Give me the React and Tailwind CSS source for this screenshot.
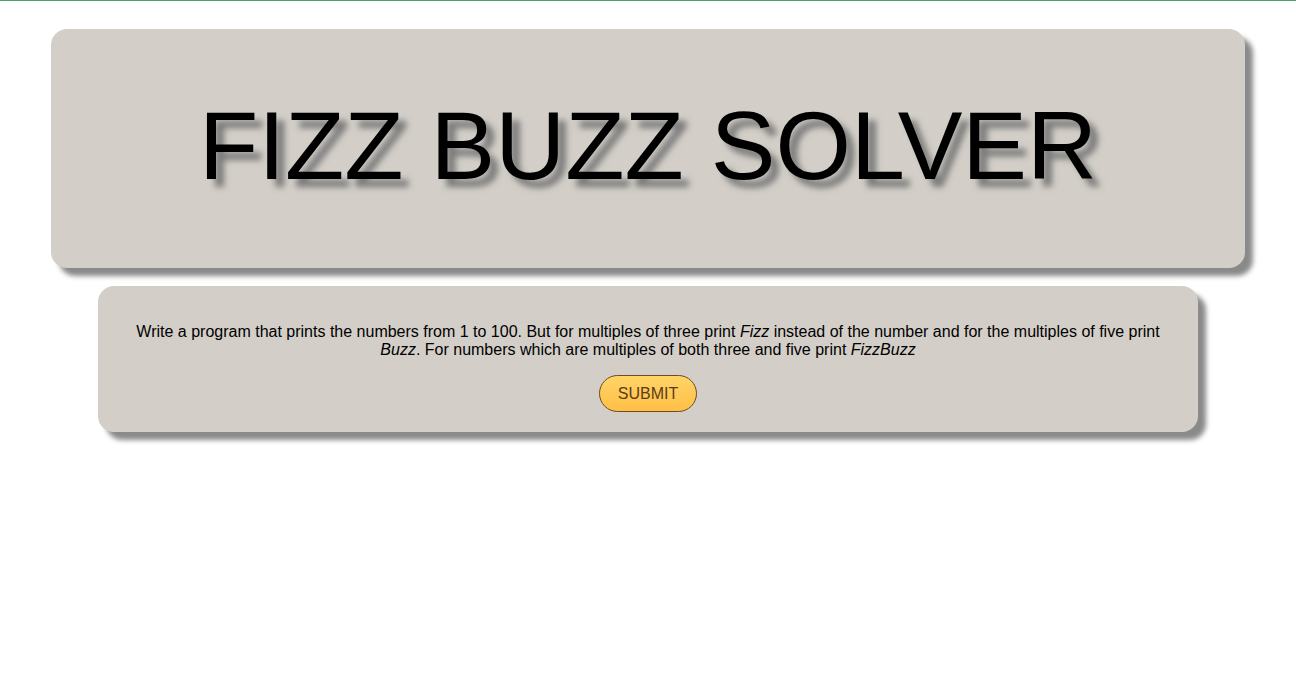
import React from "react";

export default function App() {
  return (
    <div className="min-h-[684px] bg-white border-t border-[#48a06f] font-['Liberation_Sans',Arial,sans-serif] text-black">
      <header className="mx-[51px] mt-[28px] h-[239px] rounded-[16px] bg-[#d3cfc8] shadow-[8px_8px_5px_#8a8a8a] flex items-center justify-center">
        <h1 className="text-[97px] leading-none font-normal [text-shadow:8px_8px_6px_#7a7a7a] -mt-[6px]">
          FIZZ BUZZ SOLVER
        </h1>
      </header>

      <section className="mx-[98px] mt-[18px] rounded-[16px] bg-[#d3cfc8] shadow-[8px_8px_5px_#8a8a8a] px-[36px] pt-[37px] pb-[20px] flex flex-col items-center">
        <p className="text-[16px] leading-[18px] text-center">
          Write a program that prints the numbers from 1 to 100. But for multiples of three print <i>Fizz</i> instead of the number and for the multiples of five print <i>Buzz</i>. For numbers which are multiples of both three and five print <i>FizzBuzz</i>
        </p>
        <button className="mt-[16px] w-[98px] h-[37px] rounded-full border border-[#6b4a25] bg-gradient-to-b from-[#ffd466] to-[#ffbf45] text-[16px] text-[#5a3a1c]">
          SUBMIT
        </button>
      </section>
    </div>
  );
}
